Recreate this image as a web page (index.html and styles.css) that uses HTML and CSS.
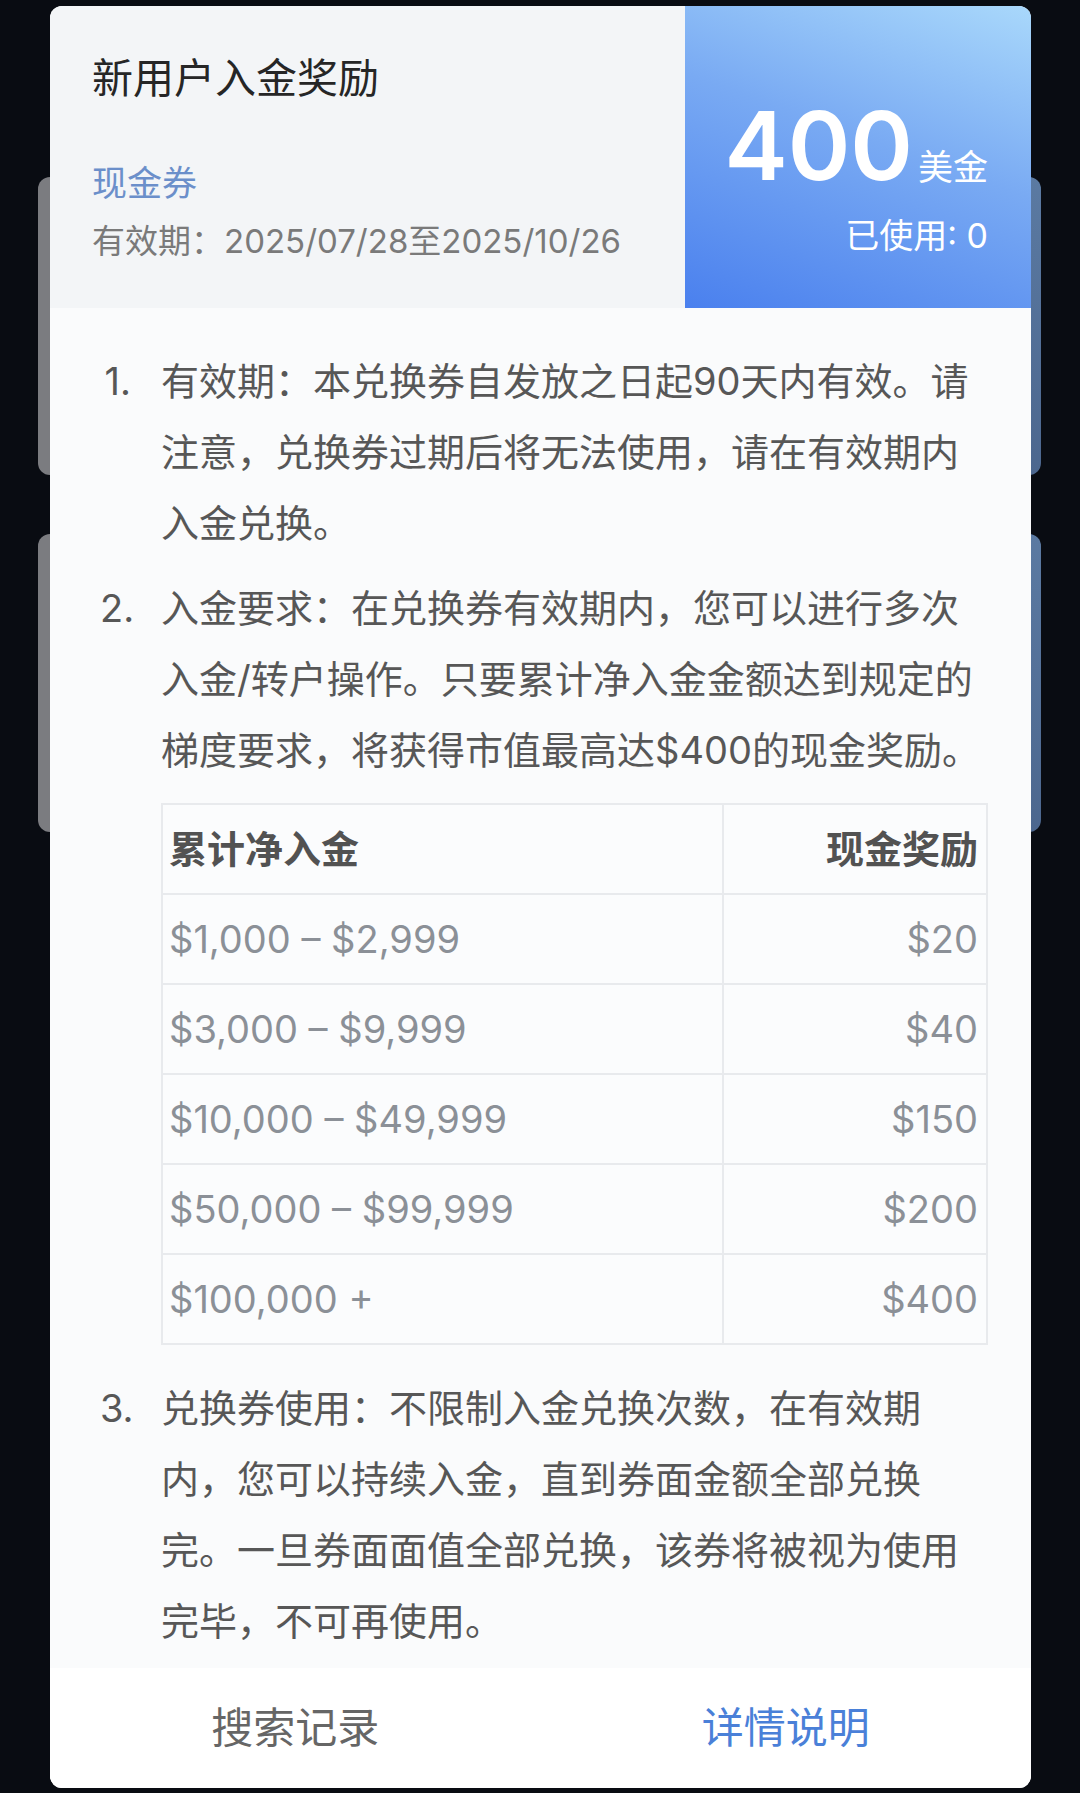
FILE: index.html
```html
<!DOCTYPE html>
<html lang="zh-CN">
<head>
    <meta charset="UTF-8">
    <meta name="viewport" content="width=device-width, initial-scale=1.0">
    <title>新用户入金奖励</title>
    <link rel="stylesheet" href="styles.css">
</head>
<body>
    <!-- 背后的卡券列表（被弹窗遮住） -->
    <div class="coupon-list">
        <div class="coupon-bg">
            <div class="coupon-bg-left"></div>
            <div class="coupon-bg-right"></div>
        </div>
        <div class="coupon-bg">
            <div class="coupon-bg-left"></div>
            <div class="coupon-bg-right"></div>
        </div>
    </div>

    <div class="modal">
        <div class="modal-header">
            <div class="header-info">
                <div class="coupon-title">新用户入金奖励</div>
                <div class="coupon-type">现金券</div>
                <div class="coupon-date">有效期：2025/07/28至2025/10/26</div>
            </div>
            <div class="header-amount">
                <div class="amount-row">
                    <span class="amount">400</span>
                    <span class="unit">美金</span>
                </div>
                <div class="used">已使用: 0</div>
            </div>
        </div>

        <div class="modal-body">
            <ol class="rule-list">
                <li>
                    <span class="rule-num">1.</span>
                    <div class="rule-text">有效期：本兑换券自发放之日起90天内有效。请注意，兑换券过期后将无法使用，请在有效期内入金兑换。</div>
                </li>
                <li>
                    <span class="rule-num">2.</span>
                    <div class="rule-text">
                        入金要求：在兑换券有效期内，您可以进行多次入金/转户操作。只要累计净入金金额达到规定的梯度要求，将获得市值最高达$400的现金奖励。
                        <table class="reward-table">
                            <thead>
                                <tr>
                                    <th class="col-range">累计净入金</th>
                                    <th class="col-reward">现金奖励</th>
                                </tr>
                            </thead>
                            <tbody>
                                <tr><td>$1,000 – $2,999</td><td class="col-reward">$20</td></tr>
                                <tr><td>$3,000 – $9,999</td><td class="col-reward">$40</td></tr>
                                <tr><td>$10,000 – $49,999</td><td class="col-reward">$150</td></tr>
                                <tr><td>$50,000 – $99,999</td><td class="col-reward">$200</td></tr>
                                <tr><td>$100,000 +</td><td class="col-reward">$400</td></tr>
                            </tbody>
                        </table>
                    </div>
                </li>
                <li>
                    <span class="rule-num">3.</span>
                    <div class="rule-text">兑换券使用：不限制入金兑换次数，在有效期内，您可以持续入金，直到券面金额全部兑换完。一旦券面面值全部兑换，该券将被视为使用完毕，不可再使用。</div>
                </li>
            </ol>
        </div>

        <div class="modal-footer">
            <div class="footer-btn">搜索记录</div>
            <div class="footer-btn primary">详情说明</div>
        </div>
    </div>
</body>
</html>
```

FILE: styles.css
```css
body {
    margin: 0;
    height: 1793px;
    position: relative;
    overflow: hidden;
    background-color: #090c12;
    font-family: Inter, "Noto Sans CJK SC", sans-serif;
}
.coupon-list {
    display: flex;
    flex-direction: column;
    gap: 59px;
    padding: 177px 39px 0 38px;
}
.coupon-bg {
    display: flex;
    height: 298px;
    border-radius: 12px;
    overflow: hidden;
}
.coupon-bg-left {
    flex: 1;
    background-color: #7b7c80;
}
.coupon-bg-right {
    width: 340px;
    background: linear-gradient(200deg, #5b7aa2, #465f86);
}
.modal {
    position: absolute;
    top: 6px;
    left: 50px;
    width: 981px;
    bottom: 5px;
    display: flex;
    flex-direction: column;
    border-radius: 12px;
    overflow: hidden;
    background-color: #fafbfc;
}
.modal-header {
    display: flex;
    flex-shrink: 0;
    height: 302px;
}
.header-info {
    flex: 1;
    padding: 48px 0 0 42px;
    background-color: #f3f5f7;
}
.coupon-title {
    font-size: 41px;
    line-height: 48px;
    color: #262626;
}
.coupon-type {
    margin-top: 59px;
    font-size: 35px;
    line-height: 44px;
    color: #6b8fca;
}
.coupon-date {
    margin-top: 16px;
    font-size: 33px;
    line-height: 40px;
    color: #7a7a7a;
}
.header-amount {
    width: 346px;
    box-sizing: border-box;
    padding: 92px 43px 0 0;
    text-align: right;
    color: #fff;
    background: linear-gradient(200deg, #a9d8fb 0%, #79aaf3 45%, #4a80ee 100%);
}
.amount-row {
    display: flex;
    justify-content: flex-end;
    align-items: baseline;
    line-height: 1;
}
.amount {
    font-size: 95px;
    font-weight: 600;
}
.unit {
    margin-left: 5px;
    font-size: 35px;
}
.used {
    margin-top: 23px;
    font-size: 34px;
    line-height: 40px;
}
.modal-body {
    flex: 1;
    min-height: 0;
    overflow: hidden;
    padding: 38px 43px 0 50px;
}
.rule-list {
    margin: 0;
    padding: 0;
    list-style: none;
}
.rule-list li {
    display: flex;
    font-size: 38px;
    line-height: 71px;
    color: #575757;
}
.rule-list li + li {
    margin-top: 14px;
}
.rule-num {
    flex-shrink: 0;
    width: 31px;
    margin-right: 30px;
    text-align: right;
}
.rule-text {
    flex: 1;
    min-width: 0;
}
.reward-table {
    width: 100%;
    margin: 17px 0 14px;
    border-collapse: collapse;
    background-color: #fbfcfd;
}
.reward-table th, .reward-table td {
    height: 88px;
    padding: 0 8px 0 6px;
    border: 2px solid #e8eaed;
    font-size: 38px;
    line-height: 1;
    text-align: left;
    color: #8b9097;
}
.reward-table th {
    font-weight: 600;
    color: #525252;
}
.reward-table .col-range {
    width: 68%;
}
.reward-table .col-reward {
    text-align: right;
}
.modal-footer {
    display: flex;
    flex-shrink: 0;
    height: 120px;
    background-color: #fff;
}
.footer-btn {
    flex: 1;
    text-align: center;
    font-size: 42px;
    line-height: 120px;
    color: #666;
}
.footer-btn.primary {
    color: #4a80d8;
}
```
